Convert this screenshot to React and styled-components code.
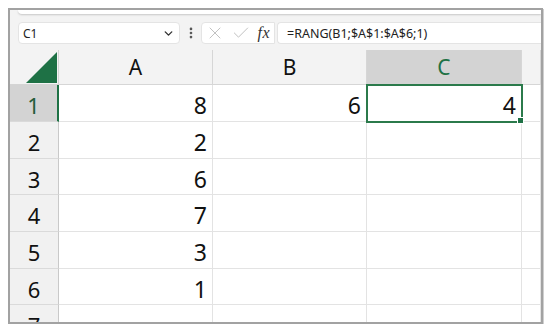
import styled, { createGlobalStyle } from "styled-components";
import { X, Check, ChevronDown, EllipsisVertical } from "lucide-react";

const green = "#1e7145";

const rows = [
  { n: 1, a: "8", b: "6", c: "4", h: 37 },
  { n: 2, a: "2", h: 37 },
  { n: 3, a: "6", h: 36 },
  { n: 4, a: "7", h: 37 },
  { n: 5, a: "3", h: 37 },
  { n: 6, a: "1", h: 36 },
  { n: 7, h: 37 },
];

function App() {
  return (
    <>
      <GlobalStyle />
      <Frame>
        <RibbonEdge />
        <FormulaRow>
          <NameBox>
            <span>C1</span>
            <ChevronDown size={13} strokeWidth={2.6} color="#333" />
          </NameBox>
          <Dots>
            <EllipsisVertical size={14} strokeWidth={2.6} color="#555" />
          </Dots>
          <ActionBox>
            <X size={20} strokeWidth={1} color="#b4b4b4" />
            <Check size={20} strokeWidth={1} color="#b4b4b4" />
            <Fx>fx</Fx>
          </ActionBox>
          <FormulaBox>=RANG(B1;$A$1:$A$6;1)</FormulaBox>
        </FormulaRow>
        <Sheet $rows={rows.map((r) => r.h + "px").join(" ")}>
          <Corner>
            <Triangle />
          </Corner>
          <ColHead>A</ColHead>
          <ColHead>B</ColHead>
          <ColHead $active>C</ColHead>
          <ColHead />
          {rows.map((r) => (
            <Row key={r.n} {...r} />
          ))}
        </Sheet>
      </Frame>
    </>
  );
}

function Row({ n, a, b, c }) {
  return (
    <>
      <RowHead $active={n === 1}>{n}</RowHead>
      <Cell>{a}</Cell>
      <Cell>{b}</Cell>
      {n === 1 ? (
        <Cell $selected>
          {c}
          <Handle />
        </Cell>
      ) : (
        <Cell />
      )}
      <Cell />
    </>
  );
}

export default App;

const GlobalStyle = createGlobalStyle`
  body {
    margin: 0;
    background: #fff;
    font-family: "Noto Sans", "Open Sans", sans-serif;
  }
`;

const Frame = styled.div`
  margin: 8px 0 0 8px;
  width: 535px;
  height: 316px;
  box-sizing: border-box;
  border: 2px solid #a2a2a2;
  box-shadow: 1px 1px 0 #cfcfcf;
  background: #f3f3f3;
  overflow: hidden;
  display: flex;
  flex-direction: column;
  & > * {
    flex-shrink: 0;
  }
`;

const RibbonEdge = styled.div`
  height: 4px;
  margin-left: 8px;
  background: #fff;
  border-radius: 0 0 0 6px;
  box-shadow: 0 1px 2px rgba(0, 0, 0, 0.18);
`;

const FormulaRow = styled.div`
  margin-top: 8px;
  height: 22px;
  display: flex;
  align-items: stretch;
  padding-left: 8px;
`;

const Box = styled.div`
  background: #fff;
  border: 1px solid #e4e4e4;
  box-sizing: border-box;
  display: flex;
  align-items: center;
`;

const NameBox = styled(Box)`
  width: 162px;
  border-radius: 4px;
  padding: 0 4px 0 4px;
  justify-content: space-between;
  font-size: 12px;
  color: #222;
`;

const Dots = styled.div`
  width: 21px;
  display: flex;
  align-items: center;
  justify-content: center;
`;

const ActionBox = styled(Box)`
  width: 74px;
  border-radius: 4px 0 0 4px;
  padding: 0 4px 0 3px;
  gap: 2px;
  justify-content: space-between;
`;

const Fx = styled.span`
  font-family: "Liberation Serif", serif;
  font-style: italic;
  font-size: 16px;
  color: #333;
  letter-spacing: 0.5px;
`;

const FormulaBox = styled(Box)`
  flex: 1;
  margin-left: 2px;
  border-radius: 4px 0 0 4px;
  border-right: none;
  padding-left: 9px;
  font-size: 12.5px;
  color: #222;
`;

const Sheet = styled.div`
  margin-top: 6px;
  display: grid;
  grid-template-columns: 49px 154px 154px 155px 1fr;
  grid-template-rows: 35px ${(p) => p.$rows};
  background: #fff;
`;

const Corner = styled.div`
  background: #f3f3f3;
  border-right: 1px solid #d4d4d4;
  border-bottom: 1px solid #d4d4d4;
  display: flex;
  align-items: flex-end;
  justify-content: flex-end;
  padding: 0 1px 1px 0;
`;

const Triangle = styled.span`
  width: 31px;
  height: 31px;
  background: ${green};
  clip-path: polygon(100% 0, 100% 100%, 0 100%);
`;

const ColHead = styled.div`
  background: ${(p) => (p.$active ? "#d3d3d3" : "#f3f3f3")};
  color: ${(p) => (p.$active ? green : "#111")};
  border-right: 1px solid #d6d6d6;
  border-bottom: 1px solid ${(p) => (p.$active ? green : "#d6d6d6")};
  display: flex;
  align-items: center;
  justify-content: center;
  font-size: 21px;
`;

const RowHead = styled.div`
  background: ${(p) => (p.$active ? "#d3d3d3" : "#f1f1f1")};
  color: ${(p) => (p.$active ? "#245c3a" : "#111")};
  border-right: ${(p) => (p.$active ? `2px solid ${green}` : "1px solid #c9c9c9")};
  border-bottom: 1px solid #dadada;
  display: flex;
  align-items: center;
  justify-content: center;
  padding-top: 4px;
  box-sizing: border-box;
  font-size: 22px;
`;

const Cell = styled.div`
  position: relative;
  border-right: 1px solid #e3e3e3;
  border-bottom: 1px solid #e3e3e3;
  display: flex;
  align-items: center;
  justify-content: flex-end;
  padding: 4px 5px 0 0;
  box-sizing: border-box;
  font-size: 23px;
  color: #111;
  ${(p) =>
    p.$selected &&
    `
    outline: 2px solid #2b7a4b;
    outline-offset: -1px;
    z-index: 1;
  `}
`;

const Handle = styled.span`
  position: absolute;
  right: -3px;
  bottom: -3px;
  width: 5px;
  height: 5px;
  background: ${green};
  border: 1px solid #fff;
`;
